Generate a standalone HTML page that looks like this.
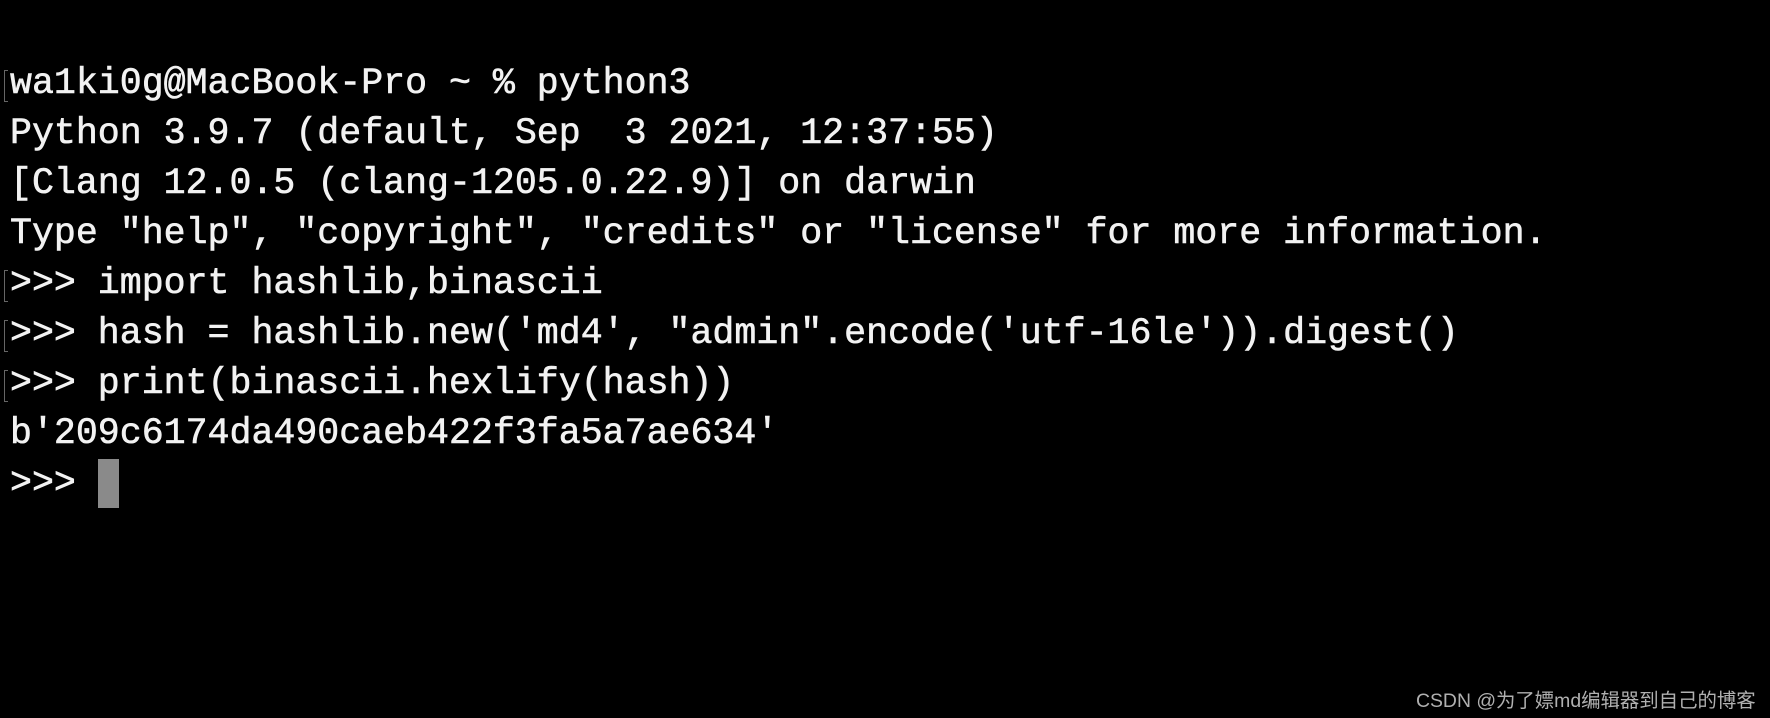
<!DOCTYPE html>
<html><head><meta charset="utf-8"><style>
html,body{margin:0;padding:0;background:#000;width:1770px;height:718px;overflow:hidden;position:relative}
pre{position:absolute;left:10px;top:59px;margin:0;font-family:"Liberation Mono",monospace;font-size:36.6px;line-height:50px;color:#f2f2f2;white-space:pre;-webkit-text-stroke:0.6px #f2f2f2}
.cur{display:inline-block;width:21px;height:49px;background:#8a8a8a;vertical-align:top;margin-top:0px}
.mk{position:absolute;left:4px;width:3px;height:30px;border:1px solid #666;border-right:none}
.wm{position:absolute;left:1416px;top:684px;font-family:"Liberation Sans","Noto Sans CJK SC",sans-serif;font-size:19.4px;color:#b0b0b0}
</style></head><body>
<div class="mk" style="top:70px"></div>
<div class="mk" style="top:270px"></div>
<div class="mk" style="top:320px"></div>
<div class="mk" style="top:370px"></div>
<pre>wa1ki0g@MacBook-Pro ~ % python3
Python 3.9.7 (default, Sep  3 2021, 12:37:55)
[Clang 12.0.5 (clang-1205.0.22.9)] on darwin
Type "help", "copyright", "credits" or "license" for more information.
&gt;&gt;&gt; import hashlib,binascii
&gt;&gt;&gt; hash = hashlib.new('md4', "admin".encode('utf-16le')).digest()
&gt;&gt;&gt; print(binascii.hexlify(hash))
b'209c6174da490caeb422f3fa5a7ae634'
&gt;&gt;&gt; <span class="cur"></span></pre>
<div class="wm">CSDN @为了嫖md编辑器到自己的博客</div>
</body></html>
